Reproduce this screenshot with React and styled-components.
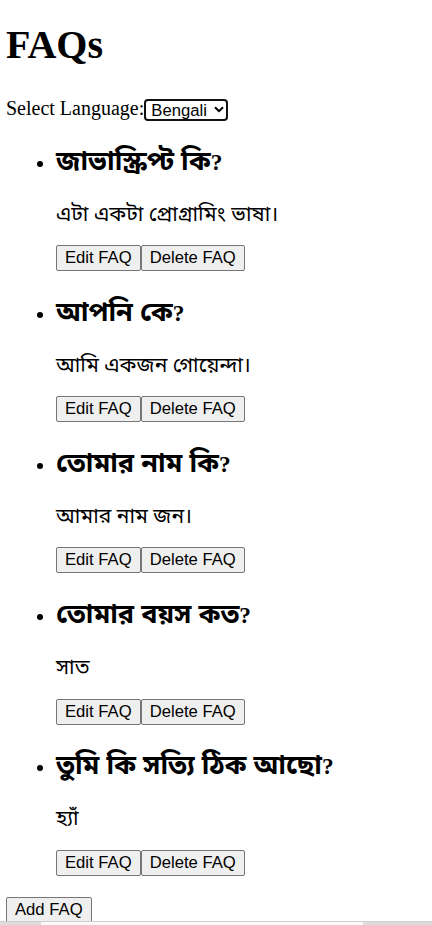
import React, { useState } from 'react';
import styled, { createGlobalStyle } from 'styled-components';

const GlobalStyle = createGlobalStyle`
  body {
    margin: 0;
    font-family: "Liberation Serif", "Noto Sans Bengali", "Noto Serif Bengali", serif;
    font-size: 20px;
    color: #000;
    background: #fff;
  }
`;

const Page = styled.div`
  padding: 0 6px;
`;

const Title = styled.h1`
  font-size: 40px;
  font-weight: bold;
  line-height: 46px;
  margin: 22px 0 28px;
`;

const LangRow = styled.div`
  display: flex;
  align-items: center;
  height: 24px;
  line-height: 24px;
`;

const SelectWrap = styled.div`
  position: relative;
  display: inline-flex;
  margin-top: 3px;
`;

const LangSelect = styled.select`
  appearance: none;
  font-family: "Liberation Sans", Arial, sans-serif;
  font-size: 16.67px;
  width: 84px;
  height: 22px;
  padding: 0 0 0 5px;
  border: 2px solid #111;
  border-radius: 4px;
  background: #fff;
  color: #000;
  margin: 0;
`;

const Chevron = styled.svg`
  position: absolute;
  right: 4px;
  top: 7px;
  pointer-events: none;
`;

const List = styled.ul`
  margin: 0 0 21.3px;
  padding-left: 50px;
  list-style: disc;
`;

const Question = styled.h3`
  font-size: 23.4px;
  font-weight: bold;
  line-height: 32px;
  margin: 25.9px 0 22px;
`;

const Bangla = styled.span`
  font-family: "Noto Sans Bengali", "Noto Serif Bengali", sans-serif;
  font-size: ${({ size }) => size}px;
  line-height: 1;
`;

const Answer = styled.p`
  line-height: 28px;
  margin: 0 0 17.25px;
`;

const Actions = styled.div`
  display: flex;
`;

const Button = styled.button`
  font-family: "Liberation Sans", Arial, sans-serif;
  font-size: 16.67px;
  color: #000;
  background: #efefef;
  border: 1px solid #767676;
  border-radius: 2px;
  height: 26px;
  padding: 0 8px;
  margin: 0;
`;

/* the window's horizontal scrollbar, seen at the bottom edge */
const ScrollTrack = styled.div`
  position: fixed;
  left: 0;
  right: 0;
  bottom: 0;
  height: 3px;
  background: #dcdcdc;
  border-top: 1px solid #d0d0d0;
`;

const ScrollThumb = styled.div`
  margin-left: 41px;
  width: 322px;
  height: 100%;
  background: #fafafa;
`;

const faqs = [
  { q: 'জাভাস্ক্রিপ্ট কি', a: 'এটা একটা প্রোগ্রামিং ভাষা।' },
  { q: 'আপনি কে', a: 'আমি একজন গোয়েন্দা।' },
  { q: 'তোমার নাম কি', a: 'আমার নাম জন।' },
  { q: 'তোমার বয়স কত', a: 'সাত' },
  { q: 'তুমি কি সত্যি ঠিক আছো', a: 'হ্যাঁ' },
];

export default function App() {
  const [lang, setLang] = useState('bn');
  return (
    <Page>
      <GlobalStyle />
      <Title>FAQs</Title>
      <LangRow>
        <label htmlFor="lang">Select Language:</label>
        <SelectWrap>
          <LangSelect id="lang" value={lang} onChange={(e) => setLang(e.target.value)}>
            <option value="en">English</option>
            <option value="hi">Hindi</option>
            <option value="bn">Bengali</option>
          </LangSelect>
          <Chevron width="10" height="7" viewBox="0 0 10 7">
            <path d="M1 1.2 L5 5.2 L9 1.2" fill="none" stroke="#000" strokeWidth="2" />
          </Chevron>
        </SelectWrap>
      </LangRow>
      <List>
        {faqs.map((f) => (
          <li key={f.q}>
            <Question>
              <Bangla size={27}>{f.q}</Bangla>?
            </Question>
            <Answer>
              <Bangla size={21}>{f.a}</Bangla>
            </Answer>
            <Actions>
              <Button>Edit FAQ</Button>
              <Button>Delete FAQ</Button>
            </Actions>
          </li>
        ))}
      </List>
      <Button>Add FAQ</Button>
      <ScrollTrack>
        <ScrollThumb />
      </ScrollTrack>
    </Page>
  );
}
